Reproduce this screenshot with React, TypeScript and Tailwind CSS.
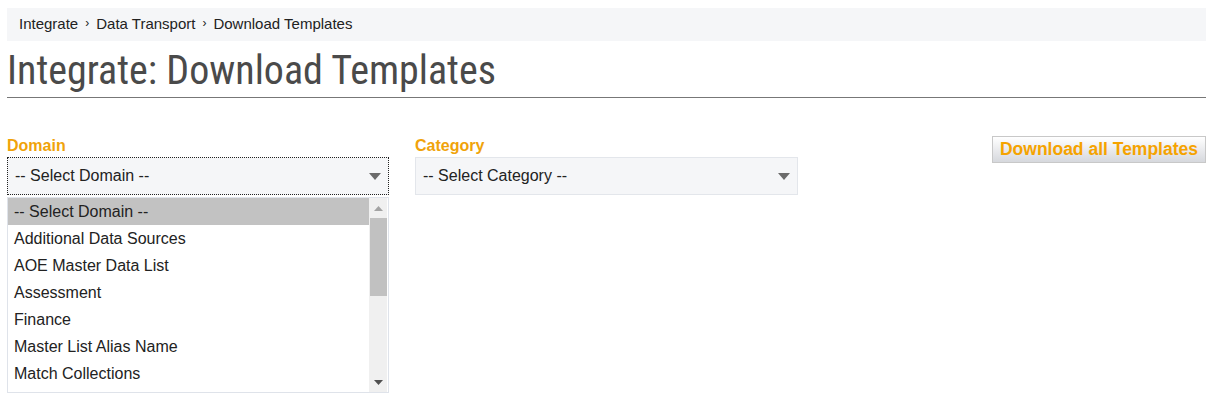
import React from "react";

const options = [
  "-- Select Domain --",
  "Additional Data Sources",
  "AOE Master Data List",
  "Assessment",
  "Finance",
  "Master List Alias Name",
  "Match Collections",
];

function Caret() {
  return (
    <svg width="12" height="7" viewBox="0 0 12 7" className="block">
      <path d="M0 0 L12 0 L6 7 Z" fill="#6b6b6b" />
    </svg>
  );
}

export default function App() {
  return (
    <div className="w-[1223px] h-[413px] bg-white overflow-hidden" style={{ fontFamily: '"Liberation Sans", Arial, sans-serif' }}>
      <div className="ml-[7px] w-[1199px] pt-[8px]">
        <div className="h-[33px] bg-[#f5f6f8] flex items-center pl-[12px] text-[15px] text-[#222]">
          <span>Integrate</span>
          <span className="mx-[7px] text-[12px] relative -top-[2px]">›</span>
          <span>Data Transport</span>
          <span className="mx-[7px] text-[12px] relative -top-[2px]">›</span>
          <span>Download Templates</span>
        </div>
        <div className="h-[57px] border-b border-[#777] flex items-start">
          <h1
            className="text-[40px] leading-[60px] text-[#4a4a4a] font-normal whitespace-nowrap"
            style={{ fontFamily: '"Roboto Condensed", Roboto, sans-serif', fontStretch: "condensed" }}
          >
            Integrate: Download Templates
          </h1>
        </div>
        <div className="flex items-start mt-[37px]">
          <div className="w-[382px]">
            <div className="text-[16px] font-bold text-[#f0a30a] leading-[19px] mb-[2px] mt-[1px]">Domain</div>
            <div className="h-[38px] bg-[#f5f6f8] border border-dotted border-[#222] flex items-center justify-between pl-[7px] pr-[7px] text-[16px] text-[#222]">
              <span>-- Select Domain --</span>
              <Caret />
            </div>
            <div className="mt-[2px] h-[196px] border border-[#dfe3ea] flex">
              <div className="flex-1 flex flex-col">
                {options.map((o, i) => (
                  <div
                    key={o}
                    className={`h-[27px] flex items-center pl-[6px] text-[16px] text-[#222] ${i === 0 ? "bg-[#c2c2c2]" : ""}`}
                  >
                    {o}
                  </div>
                ))}
              </div>
              <div className="w-[18px] bg-[#f0f0f0] flex flex-col items-center mr-[1px]">
                <div className="h-[20px] flex items-center justify-center">
                  <svg width="9" height="5" viewBox="0 0 9 5"><path d="M0 5 L9 5 L4.5 0 Z" fill="#a3a3a3" /></svg>
                </div>
                <div className="w-[17px] h-[78px] bg-[#c1c1c1]" />
                <div className="flex-1" />
                <div className="h-[20px] flex items-center justify-center">
                  <svg width="9" height="5" viewBox="0 0 9 5"><path d="M0 0 L9 0 L4.5 5 Z" fill="#505050" /></svg>
                </div>
              </div>
            </div>
          </div>
          <div className="w-[383px] ml-[26px]">
            <div className="text-[16px] font-bold text-[#f0a30a] leading-[19px] mb-[2px] mt-[1px]">Category</div>
            <div className="h-[38px] bg-[#f5f6f8] border border-[#e3e6eb] flex items-center justify-between pl-[7px] pr-[7px] text-[16px] text-[#222] mt-[1px]">
              <span>-- Select Category --</span>
              <Caret />
            </div>
          </div>
          <div className="flex-1 flex justify-end">
            <button className="h-[27px] mt-[1px] px-[7px] border border-[#c8c8c8] bg-gradient-to-b from-white to-[#d6d8dd] text-[17.5px] font-bold text-[#f5a300] leading-none">
              Download all Templates
            </button>
          </div>
        </div>
      </div>
    </div>
  );
}
